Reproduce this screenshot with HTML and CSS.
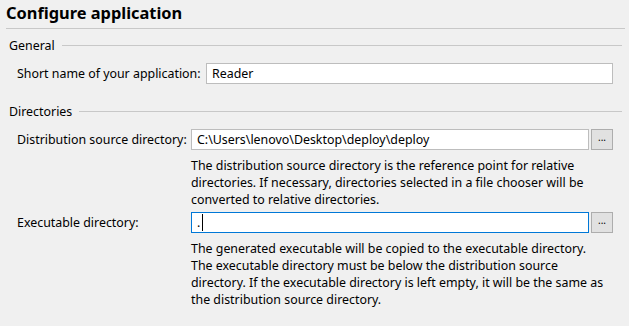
FILE: index.html
```html
<!DOCTYPE html>
<html lang="en">
<head>
  <meta charset="UTF-8" />
  <title>Configure application</title>
  <link rel="stylesheet" href="styles.css">
</head>
<body>
  <div class="page">
    <h1 class="title">Configure application</h1>

    <section class="group">
      <div class="group-head"><span>General</span></div>
      <div class="form-grid general">
        <label class="field-label">Short name of your application:</label>
        <div class="text-field">Reader</div>
      </div>
    </section>

    <section class="group">
      <div class="group-head"><span>Directories</span></div>
      <div class="form-grid dirs">
        <label class="field-label">Distribution source directory:</label>
        <div class="field-row">
          <div class="text-field">C:\Users\lenovo\Desktop\deploy\deploy</div>
          <button class="browse">...</button>
        </div>
        <p class="help">The distribution source directory is the reference point for relative directories. If necessary, directories selected in a file chooser will be converted to relative directories.</p>

        <label class="field-label">Executable directory:</label>
        <div class="field-row">
          <div class="text-field focused">.<span class="caret"></span></div>
          <button class="browse">...</button>
        </div>
        <p class="help">The generated executable will be copied to the executable directory. The executable directory must be below the distribution source directory. If the executable directory is left empty, it will be the same as the distribution source directory.</p>
      </div>
    </section>
  </div>
</body>
</html>
```
FILE: styles.css
```css
* { box-sizing: border-box; margin: 0; padding: 0; }
html, body { height: 100%; }
body {
  font-family: 'Noto Sans', sans-serif;
  font-size: 12.4px;
  color: #000;
  background: #f0f0f0;
  overflow: hidden;
}
.page {
  padding: 0 16px 0 0;
}
.title {
  margin-left: 6px;
  margin-right: -12px;
  font-size: 16.4px;
  font-weight: 700;
  line-height: 26px;
  padding-bottom: 2px;
  border-bottom: 1px solid #c8c8c8;
}
.group-head {
  display: flex;
  align-items: center;
  gap: 7px;
  margin: 8px -9px 9px 9px;
  line-height: 17px;
  height: 17px;
}
.group-head::after {
  content: '';
  flex: 1;
  height: 1px;
  background: #c8c8c8;
}
.group + .group .group-head { margin-top: 19px; }
.form-grid {
  display: grid;
  padding-left: 17px;
  align-items: center;
}
.form-grid.general { grid-template-columns: 189px 1fr; }
.form-grid.dirs { grid-template-columns: 174px 1fr; }
.field-label { line-height: 17px; }
.text-field {
  height: 21px;
  line-height: 19px;
  padding: 0 5px;
  background: #fff;
  border: 1px solid #bdbdbd;
  white-space: nowrap;
  overflow: hidden;
}
.text-field.focused { border-color: #0078d7; }
.caret {
  display: inline-block;
  width: 1px;
  height: 17px;
  margin-left: 2px;
  background: #000;
  vertical-align: -4px;
}
.field-row {
  display: flex;
  gap: 2px;
}
.field-row .text-field { flex: 1; }
.browse {
  flex: 0 0 22px;
  height: 21px;
  background: #e1e1e1;
  border: 1px solid #adadad;
  font-family: inherit;
  font-size: 10px;
  line-height: 15px;
  padding-bottom: 4px;
  color: #000;
}
.help {
  grid-column: 2;
  line-height: 17px;
  margin: 7px 0 4px;
  padding-right: 8px;
}
```
